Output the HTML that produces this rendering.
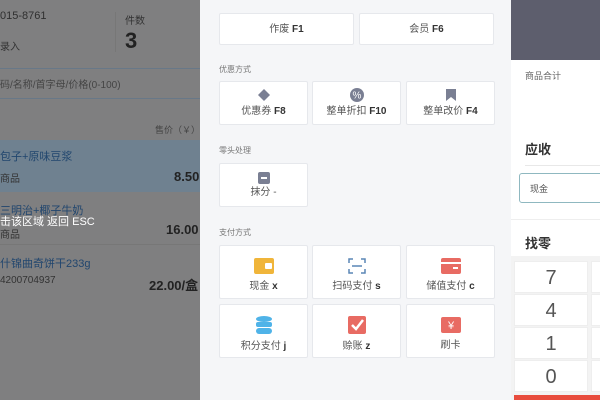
<!DOCTYPE html>
<html><head><meta charset="utf-8"><style>
*{margin:0;padding:0;box-sizing:border-box}
body{width:600px;height:400px;overflow:hidden;position:relative;font-family:"Liberation Sans","Noto Sans CJK SC",sans-serif;background:#f5f6f8}
.a{position:absolute;white-space:nowrap}
#left{position:absolute;left:0;top:0;width:200px;height:400px;background:#7f7f80;color:#2a2a2a}
#mid{position:absolute;left:200px;top:0;width:311px;height:400px;background:#f5f6f8}
.btn{position:absolute;background:#fff;border:1px solid #e6e8ec;border-radius:2px;font-size:10px;color:#555;text-align:center}
.btn b{color:#333}
.lbl{position:absolute;font-size:8px;color:#777}
#right{position:absolute;left:511px;top:0;width:89px;height:400px;background:#fff}
.key{position:absolute;left:3px;width:74px;height:32px;border:1px solid #eee;font-size:20px;color:#555;text-align:center;line-height:32px;background:#fff}
</style></head><body>
<div id="left">
 <div class="a" style="left:0;top:10px;font-size:11px;color:#2f2f2f">015-8761</div>
 <div class="a" style="left:0;top:38px;font-size:10px;color:#333">录入</div>
 <div class="a" style="left:115px;top:12px;width:1px;height:40px;background:#777"></div>
 <div class="a" style="left:125px;top:12px;font-size:10px;color:#333">件数</div>
 <div class="a" style="left:125px;top:28px;font-size:22px;font-weight:bold;color:#222">3</div>
 <div class="a" style="left:0;top:68px;width:200px;height:1px;background:#687888"></div>
 <div class="a" style="left:0;top:76px;font-size:10px;color:#444">码/名称/首字母/价格(0-100)</div>
 <div class="a" style="left:0;top:98px;width:200px;height:1px;background:#687888"></div>
 <div class="a" style="left:155px;top:123px;font-size:9px;color:#444">售价（￥）</div>
 <div class="a" style="left:0;top:140px;width:200px;height:52px;background:#6f8190"></div>
 <div class="a" style="left:0;top:148px;font-size:11px;color:#21466e">包子+原味豆浆</div>
 <div class="a" style="left:0;top:170px;font-size:10px;color:#333">商品</div>
 <div class="a" style="left:174px;top:169px;font-size:13px;font-weight:bold;color:#222">8.50</div>
 <div class="a" style="left:0;top:202px;font-size:11px;color:#21466e">三明治+椰子牛奶</div>
 <div class="a" style="left:0;top:213px;font-size:11px;color:#fff">击该区域 返回 ESC</div>
 <div class="a" style="left:0;top:226px;font-size:10px;color:#333">商品</div>
 <div class="a" style="left:166px;top:222px;font-size:13px;font-weight:bold;color:#222">16.00</div>
 <div class="a" style="left:0;top:244px;width:200px;height:1px;background:#777"></div>
 <div class="a" style="left:0;top:255px;font-size:11px;color:#21466e">什锦曲奇饼干233g</div>
 <div class="a" style="left:0;top:275px;font-size:10px;color:#333">4200704937</div>
 <div class="a" style="left:149px;top:275px;font-size:13px;font-weight:bold;color:#222">22.00/盒</div>
</div>
<div id="mid">
 <div class="btn" style="left:19px;top:13px;width:135px;height:32px;line-height:32px">作废 <b>F1</b></div>
 <div class="btn" style="left:159px;top:13px;width:135px;height:32px;line-height:32px">会员 <b>F6</b></div>
 <div class="lbl" style="left:19px;top:64px">优惠方式</div>
 <div class="btn" style="left:19px;top:81px;width:89px;height:44px"><svg width="14" height="14" style="margin-top:6px" viewBox="0 0 14 14"><path d="M7 1L13 7 7 13 1 7Z" fill="#7a7f93"/></svg><br><span style="position:relative;top:-3px">优惠券 <b>F8</b></span></div>
 <div class="btn" style="left:112px;top:81px;width:89px;height:44px"><svg width="14" height="14" style="margin-top:6px" viewBox="0 0 14 14"><circle cx="7" cy="7" r="7" fill="#7a7f93"/><text x="7" y="10.5" font-size="10" fill="#fff" text-anchor="middle" font-family="Liberation Sans">%</text></svg><br><span style="position:relative;top:-3px">整单折扣 <b>F10</b></span></div>
 <div class="btn" style="left:206px;top:81px;width:89px;height:44px"><svg width="14" height="14" style="margin-top:6px" viewBox="0 0 14 14"><path d="M2 1H12V13L7 9 2 13Z" fill="#7a7f93"/></svg><br><span style="position:relative;top:-3px">整单改价 <b>F4</b></span></div>
 <div class="lbl" style="left:19px;top:145px">零头处理</div>
 <div class="btn" style="left:19px;top:163px;width:89px;height:44px"><svg width="12" height="12" style="margin-top:8px" viewBox="0 0 12 12"><rect width="12" height="12" rx="2" fill="#7a7f93"/><rect x="3" y="5" width="6" height="2" fill="#fff"/></svg><br><span style="position:relative;top:-4px">抹分 -</span></div>
 <div class="lbl" style="left:19px;top:227px">支付方式</div>
 <div class="btn" style="left:19px;top:245px;width:89px;height:54px"><svg width="20" height="16" style="margin-top:12px" viewBox="0 0 20 16"><rect width="20" height="16" rx="2" fill="#f0b53a"/><rect x="11" y="5" width="7" height="6" rx="1" fill="#fff"/></svg><br><span>现金 <b>x</b></span></div>
 <div class="btn" style="left:112px;top:245px;width:89px;height:54px"><svg width="18" height="16" style="margin-top:12px" viewBox="0 0 18 16" fill="none" stroke="#5a86b5" stroke-width="1.5"><path d="M1 5V1H5M13 1H17V5M17 11V15H13M5 15H1V11M4 8H14"/></svg><br><span>扫码支付 <b>s</b></span></div>
 <div class="btn" style="left:206px;top:245px;width:89px;height:54px"><svg width="20" height="16" style="margin-top:12px" viewBox="0 0 20 16"><rect width="20" height="16" rx="2" fill="#e86b63"/><rect x="0" y="4" width="20" height="2" fill="#fff"/><rect x="12" y="9" width="5" height="2" fill="#fff"/></svg><br><span>储值支付 <b>c</b></span></div>
 <div class="btn" style="left:19px;top:304px;width:89px;height:54px"><svg width="16" height="18" style="margin-top:11px" viewBox="0 0 16 18"><ellipse cx="8" cy="3" rx="8" ry="3" fill="#4fb3e8"/><rect y="6" width="16" height="5" rx="2" fill="#4fb3e8"/><rect y="12" width="16" height="6" rx="3" fill="#4fb3e8"/></svg><br><span>积分支付 <b>j</b></span></div>
 <div class="btn" style="left:112px;top:304px;width:89px;height:54px"><svg width="18" height="18" style="margin-top:11px" viewBox="0 0 18 18"><rect width="18" height="18" rx="2" fill="#e86b63"/><path d="M4 9L8 13 15 4" stroke="#fff" stroke-width="2.5" fill="none"/></svg><br><span>赊账 <b>z</b></span></div>
 <div class="btn" style="left:206px;top:304px;width:89px;height:54px"><svg width="20" height="16" style="margin-top:12px" viewBox="0 0 20 16"><rect width="20" height="16" rx="2" fill="#e86b63"/><text x="10" y="12" font-size="11" fill="#fff" text-anchor="middle" font-family="Liberation Sans">¥</text></svg><br><span>刷卡</span></div>
</div>
<div id="right">
 <div class="a" style="left:0;top:0;width:89px;height:60px;background:#5d5e6d"></div>
 <div class="a" style="left:14px;top:69px;font-size:9px;color:#666">商品合计</div>
 <div class="a" style="left:14px;top:139px;font-size:13px;font-weight:bold;color:#333">应收</div>
 <div class="a" style="left:14px;top:165px;width:75px;height:1px;background:#e8e8e8"></div>
 <div class="a" style="left:8px;top:173px;width:90px;height:30px;border:1px solid #8fb8c0;border-radius:3px;font-size:9px;color:#555;padding:8px 0 0 10px">现金</div>
 <div class="a" style="left:0;top:219px;width:89px;height:1px;background:#eee"></div>
 <div class="a" style="left:14px;top:233px;font-size:13px;font-weight:bold;color:#333">找零</div>
 <div class="a" style="left:0;top:256px;width:89px;height:144px;background:#f3f3f3"></div>
 <div class="key" style="top:261px">7</div>
 <div class="key" style="top:294px">4</div>
 <div class="key" style="top:327px">1</div>
 <div class="key" style="top:360px">0</div>
 <div class="key" style="left:80px;top:261px"></div><div class="key" style="left:80px;top:294px"></div><div class="key" style="left:80px;top:327px"></div><div class="key" style="left:80px;top:360px"></div>
 <div class="a" style="left:3px;top:395px;width:86px;height:5px;background:#e84c3d"></div>
</div>
</body></html>
